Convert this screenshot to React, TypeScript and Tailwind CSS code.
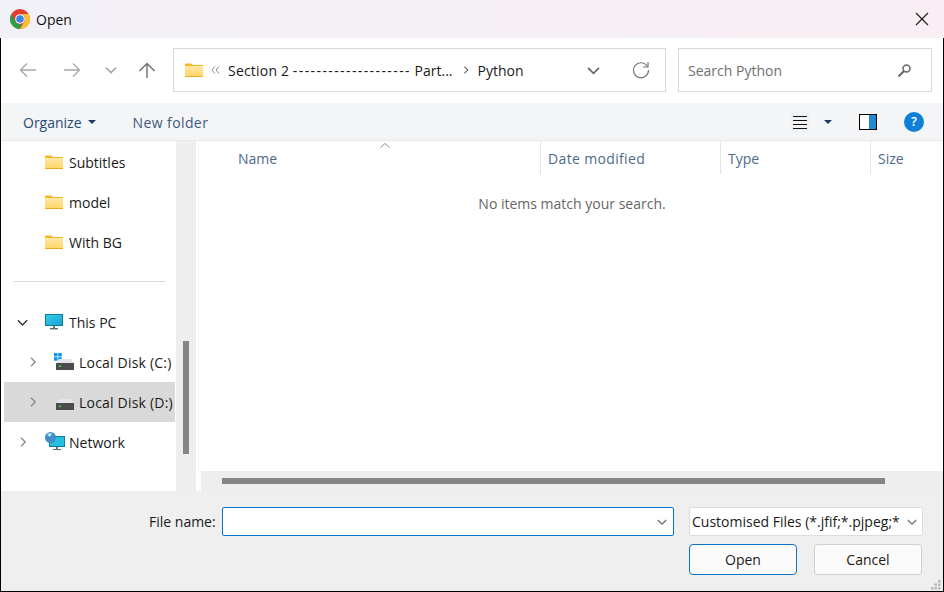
import React from "react";

const Folder = ({ w = 18 }: { w?: number }) => (
  <svg width={w} height={(w * 14) / 18} viewBox="0 0 18 14" className="shrink-0">
    <defs>
      <linearGradient id="folderFill" x1="0" y1="0" x2="0" y2="1">
        <stop offset="0" stopColor="#ffe9a6" />
        <stop offset="1" stopColor="#ffd565" />
      </linearGradient>
    </defs>
    <path d="M0 1.5 A1 1 0 0 1 1 0.5 H6 L8 2 H18 V14 H0 Z" fill="#f6b81f" />
    <path d="M0 3 H18 V14 H0 Z" fill="url(#folderFill)" />
    <path d="M0 13 H18 V14 H0 Z" fill="#eeaa20" />
  </svg>
);

const Chevron = ({ dir, color = "#8a8a8a", size = 10 }: { dir: "r" | "d"; color?: string; size?: number }) => (
  <svg width={size} height={size} viewBox="0 0 10 10" fill="none" stroke={color} strokeWidth="1.3" className="shrink-0">
    {dir === "r" ? <path d="M3 0.8 L7.2 5 L3 9.2" /> : <path d="M0.8 3 L5 7.2 L9.2 3" />}
  </svg>
);

const Chrome = () => (
  <svg width="20" height="20" viewBox="0 0 20 20" className="shrink-0">
    <circle cx="10" cy="10" r="10" fill="#e33b2e" />
    <path d="M10 20 A10 10 0 0 1 1.34 5 L5.67 12.5 A5 5 0 0 0 11.5 14.8 Z" fill="#2f9e44" />
    <path d="M10 20 A10 10 0 0 0 18.66 5 H10 A5 5 0 0 1 14.3 12.5 Z" fill="#fbc02d" />
    <circle cx="10" cy="10" r="4.8" fill="#fff" />
    <circle cx="10" cy="10" r="3.8" fill="#3b82e6" />
  </svg>
);

const Monitor = () => (
  <svg width="18" height="16" viewBox="0 0 18 16" className="shrink-0">
    <defs>
      <linearGradient id="screenFill" x1="0" y1="0" x2="1" y2="1">
        <stop offset="0" stopColor="#2fd0e6" />
        <stop offset="1" stopColor="#1ea0d8" />
      </linearGradient>
    </defs>
    <rect x="0" y="0" width="18" height="12" fill="#0f7c98" />
    <rect x="1" y="1" width="16" height="10" fill="url(#screenFill)" />
    <rect x="8" y="12" width="2" height="2" fill="#5f7f8a" />
    <rect x="5" y="14" width="8" height="1.4" fill="#596a72" />
  </svg>
);

const Disk = ({ win }: { win?: boolean }) => (
  <div className="relative w-[22px] h-[16px] shrink-0">
    {win && (
      <svg width="8" height="8" viewBox="0 0 8 8" className="absolute left-0 -top-[1px]">
        <rect width="3.5" height="3.5" fill="#0a94e8" />
        <rect x="4.2" width="3.5" height="3.5" fill="#0a94e8" />
        <rect y="4.2" width="3.5" height="3.5" fill="#0a94e8" />
        <rect x="4.2" y="4.2" width="3.5" height="3.5" fill="#0a94e8" />
      </svg>
    )}
    <svg width="18" height="11" viewBox="0 0 18 11" className="absolute left-[2px] top-[5px]">
      <path d="M3 0 H15 L18 5 H0 Z" fill="#e2e4e6" />
      <rect y="4" width="18" height="7" fill="#4c4c4c" />
      <rect x="3" y="6.5" width="2" height="1.4" fill="#4fdc4f" />
    </svg>
  </div>
);

const Network = () => (
  <div className="relative w-[22px] h-[20px] shrink-0">
    <svg width="16" height="14" viewBox="0 0 16 14" className="absolute left-[4px] top-[4px]">
      <rect width="16" height="11" fill="#0f7c98" />
      <rect x="1" y="1" width="14" height="9" fill="#27bfdf" />
      <rect x="7" y="11" width="2" height="2" fill="#5f7f8a" />
      <rect x="4" y="13" width="8" height="1" fill="#596a72" />
    </svg>
    <svg width="11" height="11" viewBox="0 0 11 11" className="absolute left-0 top-0">
      <circle cx="5.5" cy="5.5" r="5.5" fill="#3f8fc4" />
      <path d="M2 2.5 Q5 0.5 7 2 L5 5 Z" fill="#bfe3f6" />
    </svg>
  </div>
);

const TreeRow = ({ children, active }: { children: React.ReactNode; active?: boolean }) => (
  <div className={`h-[40px] w-[171px] ml-[3px] flex items-center overflow-hidden ${active ? "bg-[#d9d9d9]" : ""}`}>
    {children}
  </div>
);

const HeaderCell = ({ label, className }: { label: string; className: string }) => (
  <div className={`h-[33px] flex items-center pt-[2px] text-[#4d6a8c] ${className}`}>{label}</div>
);

export default function App() {
  return (
    <div
      className="w-[944px] h-[592px] flex flex-col overflow-hidden bg-white text-[14px] text-[#1a1a1a]"
      style={{ fontFamily: '"Open Sans", "Noto Sans", sans-serif' }}
    >
      {/* Title bar */}
      <div className="h-[38px] shrink-0 flex items-center pl-[10px] pr-[20px] bg-gradient-to-r from-[#f2f1f7] to-[#f8eef3]">
        <Chrome />
        <span className="ml-[6px] text-[#111]">Open</span>
        <svg width="14" height="14" viewBox="0 0 14 14" stroke="#1a1a1a" strokeWidth="1.1" className="ml-auto -mr-[5px]">
          <path d="M1 1 L13 13 M13 1 L1 13" />
        </svg>
      </div>

      <div className="flex-1 min-h-0 flex flex-col border-x border-b border-black">
        {/* Address row */}
        <div className="h-[65px] shrink-0 flex items-center pb-[1px]">
          <svg width="18" height="16" viewBox="0 0 18 16" fill="none" stroke="#a8a8a8" strokeWidth="1.3" className="ml-[18px]">
            <path d="M17 8 H1.5 M8 1.5 L1.5 8 L8 14.5" />
          </svg>
          <svg width="18" height="16" viewBox="0 0 18 16" fill="none" stroke="#a8a8a8" strokeWidth="1.3" className="ml-[26px]">
            <path d="M1 8 H16.5 M10 1.5 L16.5 8 L10 14.5" />
          </svg>
          <div className="ml-[24px]"><Chevron dir="d" color="#a8a8a8" size={12} /></div>
          <svg width="18" height="17" viewBox="0 0 18 17" fill="none" stroke="#6e6e6e" strokeWidth="1.4" className="ml-[21px]">
            <path d="M9 16 V1.5 M1.5 9 L9 1.5 L16.5 9" />
          </svg>
          <div className="ml-[17px] w-[493px] h-[44px] border border-[#d9d9d9] flex items-center pl-[11px] pr-[15px]">
            <Folder />
            <svg width="9" height="8" viewBox="0 0 9 8" fill="none" stroke="#8a8a8a" strokeWidth="1" className="ml-[8px]">
              <path d="M4 0.5 L1 4 L4 7.5 M8 0.5 L5 4 L8 7.5" />
            </svg>
            <span className="ml-[8px] whitespace-nowrap">
              <span className="tracking-[0.2px]">Section 2</span> <span className="tracking-[1.4px]">--------------------</span> Part...
            </span>
            <div className="ml-[9px]"><Chevron dir="r" color="#555" size={8} /></div>
            <span className="ml-[8px]">Python</span>
            <div className="ml-auto"><Chevron dir="d" color="#666" size={13} /></div>
            <svg width="18" height="18" viewBox="0 0 18 18" fill="none" stroke="#777" strokeWidth="1.2" className="ml-[32px]">
              <path d="M15.5 5.5 A7.5 7.5 0 1 0 16.5 9" />
              <path d="M16 1 V6 H11" />
            </svg>
          </div>
          <div className="ml-[12px] w-[254px] h-[44px] border border-[#d9d9d9] flex items-center pl-[9px] pr-[19px] text-[#6f6f6f]">
            <span>Search Python</span>
            <svg width="15" height="15" viewBox="0 0 15 15" fill="none" stroke="#6a6a6a" className="ml-auto">
              <circle cx="9.5" cy="5.5" r="3.5" strokeWidth="1.6" />
              <path d="M7 8 L1.5 13.5" strokeWidth="2.2" />
            </svg>
          </div>
        </div>

        {/* Toolbar */}
        <div className="h-[38px] shrink-0 flex items-center bg-[#f3f5f7] border-b border-[#e8e8e8]">
          <span className="ml-[22px] mt-[2px] text-[#2a4a75]">Organize</span>
          <svg width="8" height="4" viewBox="0 0 8 4" className="ml-[6px]"><path d="M0 0 H8 L4 4 Z" fill="#1f3a63" /></svg>
          <span className="ml-[37px] mt-[2px] text-[#3f5a7a] tracking-[0.4px]">New folder</span>
          <svg width="20" height="20" viewBox="0 0 20 20" stroke="#111" className="ml-auto mr-[3px]">
            <rect width="20" height="20" fill="#f0f2f4" stroke="none" />
            <path d="M3 4.5 H17 M3 8.5 H17 M3 12.5 H17 M3 16.5 H17" strokeWidth="1" />
          </svg>
          <svg width="8" height="4" viewBox="0 0 8 4" className="ml-[11px]"><path d="M0 0 H8 L4 4 Z" fill="#1f3a63" /></svg>
          <div className="ml-[27px] w-[18px] h-[16px] border border-black flex">
            <div className="w-[9px] bg-white" />
            <div className="flex-1 bg-[#1e8ad6]" />
          </div>
          <div className="ml-[27px] mr-[19px] w-[20px] h-[20px] rounded-full bg-[#0f80d8] flex items-center justify-center text-white text-[13px] font-semibold">?</div>
        </div>

        {/* Body */}
        <div className="flex-1 min-h-0 flex">
          {/* Sidebar */}
          <div className="w-[175px] shrink-0 pt-[1px] flex flex-col">
            <TreeRow><div className="ml-[41px] flex items-center gap-[6px]"><Folder /><span>Subtitles</span></div></TreeRow>
            <TreeRow><div className="ml-[41px] flex items-center gap-[6px]"><Folder /><span>model</span></div></TreeRow>
            <TreeRow><div className="ml-[41px] flex items-center gap-[6px]"><Folder /><span>With BG</span></div></TreeRow>
            <div className="h-[20px] flex items-end"><div className="ml-[13px] w-[151px] h-px bg-[#d9d9d9]" /></div>
            <div className="h-[20px]" />
            <TreeRow>
              <div className="ml-[13px]"><Chevron dir="d" color="#333" size={11} /></div>
              <div className="ml-[17px] flex items-center gap-[6px]"><Monitor /><span>This PC</span></div>
            </TreeRow>
            <TreeRow>
              <div className="ml-[24px]"><Chevron dir="r" /></div>
              <div className="ml-[16px] flex items-center gap-[3px]"><Disk win /><span className="whitespace-nowrap tracking-[0.2px]">Local Disk (C:)</span></div>
            </TreeRow>
            <TreeRow active>
              <div className="ml-[24px]"><Chevron dir="r" /></div>
              <div className="ml-[16px] flex items-center gap-[3px]"><Disk /><span className="whitespace-nowrap tracking-[0.2px]">Local Disk (D:)</span></div>
            </TreeRow>
            <TreeRow>
              <div className="ml-[14px]"><Chevron dir="r" /></div>
              <div className="ml-[17px] flex items-center gap-[2px]"><Network /><span>Network</span></div>
            </TreeRow>
          </div>

          {/* Vertical scrollbar */}
          <div className="w-[20px] shrink-0 bg-[#eeeeee] flex justify-center pt-[200px]">
            <div className="w-[6px] h-[113px] bg-[#858585]" />
          </div>

          {/* File list */}
          <div className="flex-1 min-w-0 flex flex-col pl-[2px]">
            <div className="flex border-l border-[#f5f5f5] pl-[1px]">
              <HeaderCell label="Name" className="w-[341px] pl-[38px] border-r border-[#e5e5e5] relative" />
              <HeaderCell label="Date modified" className="w-[180px] pl-[7px] border-r border-[#e5e5e5] tracking-[0.35px]" />
              <HeaderCell label="Type" className="w-[150px] pl-[7px] border-r border-[#e5e5e5]" />
              <HeaderCell label="Size" className="pl-[7px]" />
            </div>
            <div className="flex-1 flex justify-center pt-[19px] border-l border-[#f5f5f5] relative">
              <span className="text-[#666] mr-[-2px]">No items match your search.</span>
            </div>
            <div className="h-[20px] ml-[3px] bg-[#eeeeee] flex items-center pl-[21px]">
              <div className="h-[6px] w-[663px] bg-[#858585]" />
            </div>
          </div>
        </div>

        {/* Footer */}
        <div className="h-[100px] shrink-0 bg-[#efefef] flex flex-col relative">
          <div className="flex items-center mt-[16px] h-[29px]">
            <span className="ml-[148px] w-[73px] whitespace-nowrap text-[#1a1a1a]">File name:</span>
            <div className="w-[452px] h-[29px] bg-white border border-[#0a74c9] rounded-[2px] flex items-center justify-end pr-[6px]">
              <Chevron dir="d" color="#6e6e6e" size={10} />
            </div>
            <div className="ml-[15px] w-[234px] h-[29px] bg-white border border-[#dcdcdc] rounded-[2px] flex items-center pl-[2px] pr-[5px]">
              <span className="whitespace-nowrap overflow-hidden w-[208px]">Customised Files (*.jfif;*.pjpeg;*</span>
              <div className="ml-auto"><Chevron dir="d" color="#6e6e6e" size={10} /></div>
            </div>
          </div>
          <div className="flex justify-end mt-[8px] pr-[21px] gap-[17px]">
            <button className="w-[108px] h-[31px] rounded-[4px] bg-[#fbfbfb] border border-[#0a74c9]">Open</button>
            <button className="w-[108px] h-[31px] rounded-[4px] bg-[#fbfbfb] border border-[#d0d0d0]">Cancel</button>
          </div>
          <svg width="10" height="10" viewBox="0 0 10 10" fill="#b8b8b8" className="absolute right-[2px] bottom-[1px]">
            <rect x="7" y="0" width="2.5" height="2.5" />
            <rect x="3.5" y="3.5" width="2.5" height="2.5" />
            <rect x="7" y="3.5" width="2.5" height="2.5" />
            <rect x="0" y="7" width="2.5" height="2.5" />
            <rect x="3.5" y="7" width="2.5" height="2.5" />
            <rect x="7" y="7" width="2.5" height="2.5" />
          </svg>
        </div>

        {/* Sort caret over the column header */}
        <svg width="10" height="5" viewBox="0 0 10 5" fill="none" stroke="#8a8a8a" className="absolute left-[380px] top-[143px]">
          <path d="M0.5 4.5 L5 0.5 L9.5 4.5" />
        </svg>
      </div>
    </div>
  );
}
